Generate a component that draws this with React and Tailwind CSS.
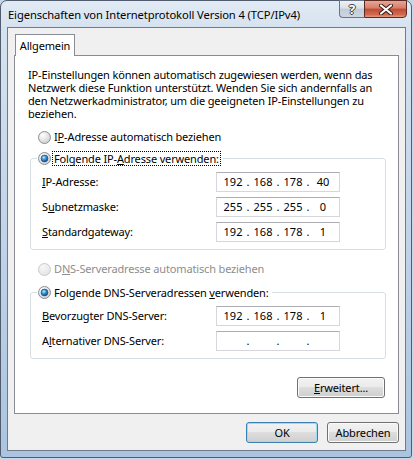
import React, { useId } from "react"

function Radio({ checked = false, disabled = false }) {
    const id = useId().replace(/:/g, "")
    return (
        <svg width="13" height="13" viewBox="0 0 13 13" className="shrink-0">
            <defs>
                <radialGradient id={`f${id}`} cx="0.35" cy="0.3" r="0.75">
                    <stop offset="0" stopColor={disabled ? "#f7f7f7" : "#ffffff"} />
                    <stop offset="1" stopColor={disabled ? "#e4e4e4" : "#cfcfcf"} />
                </radialGradient>
                <radialGradient id={`d${id}`} cx="0.4" cy="0.35" r="0.65">
                    <stop offset="0" stopColor="#c4ecff" />
                    <stop offset="0.45" stopColor="#3a9be0" />
                    <stop offset="1" stopColor="#0f4c84" />
                </radialGradient>
            </defs>
            <circle cx="6.5" cy="6.5" r="6" fill={`url(#f${id})`} stroke={disabled ? "#cacaca" : "#8c8e90"} />
            {checked && (
                <circle cx="6.5" cy="6.5" r="3.4" fill={`url(#d${id})`} stroke="#1d4f7d" strokeWidth="0.7" />
            )}
        </svg>
    )
}

function IpField({ parts }) {
    return (
        <div className="flex h-[20px] w-[124px] shrink-0 items-center border border-[#d5d7dc] border-t-[#abadb3] bg-white pl-[4px] leading-[18px] tracking-normal">
            {[0, 1, 2, 3].map((i) => (
                <React.Fragment key={i}>
                    <span className="w-[24px] text-center">{parts ? parts[i] : ""}</span>
                    {i < 3 && <span className="w-[6px] text-center">.</span>}
                </React.Fragment>
            ))}
        </div>
    )
}

function Row({ label, parts }) {
    return (
        <div className="flex items-center">
            <div className="w-[174px] leading-[14px]">{label}</div>
            <IpField parts={parts} />
        </div>
    )
}

function Btn({ children, primary = false, className = "" }) {
    return (
        <button
            className={`flex h-[21px] items-center justify-center rounded-[3px] border bg-[linear-gradient(180deg,#f2f2f2_0%,#ebebeb_46%,#dddddd_50%,#cfcfcf_100%)] leading-[14px] text-black ${
                primary
                    ? "border-[#3c7fb1] shadow-[inset_0_0_0_1px_#9fd9f6]"
                    : "border-[#707070] shadow-[inset_0_0_0_1px_#fbfbfb]"
            } ${className}`}
        >
            {children}
        </button>
    )
}

export default function App() {
    return (
        <div className="h-[459px] w-[414px] overflow-hidden whitespace-nowrap bg-[#c6d7ea] font-['Segoe_UI','Noto_Sans',sans-serif] text-[11px] tracking-[-0.15px] text-black">
            {/* Window frame */}
            <div className="flex h-[458px] w-[412px] flex-col rounded-t-[7px] rounded-b-[3px] border border-[#4f5d6e] bg-[linear-gradient(180deg,#e2ebf5_0%,#d6e2ef_6%,#c6d7ea_40%,#abc4df_100%)]">
                {/* Title bar */}
                <div className="flex h-[26px] items-start justify-between">
                    <div className="pl-[7px] pt-[6px] text-[11.2px] leading-[16px] tracking-[-0.1px]">
                        Eigenschaften von Internetprotokoll Version 4 (TCP/IPv4)
                    </div>
                    <div className="-mt-px flex pr-[4px]">
                        <div className="flex h-[18px] w-[25px] items-center justify-center rounded-bl-[4px] border border-r-0 border-[#6b7584] bg-[linear-gradient(180deg,#eef2f6_0%,#d9e0e8_45%,#c2ccd8_50%,#cdd6e0_100%)] text-[13px] font-bold leading-none text-white [text-shadow:0_1px_0_#3a4350,0_-1px_0_#3a4350,1px_0_0_#3a4350,-1px_0_0_#3a4350]">
                            ?
                        </div>
                        <div className="flex h-[18px] w-[43px] items-center justify-center rounded-br-[4px] border border-[#5b2a22] bg-[linear-gradient(180deg,#e6a697_0%,#d77c66_45%,#c04a33_50%,#d26a4f_85%,#e49a80_100%)]">
                            <svg width="14" height="11" viewBox="0 0 14 11">
                                <path d="M2 1.5 L12 9.5 M12 1.5 L2 9.5" stroke="#3a1712" strokeWidth="4" strokeLinecap="round" />
                                <path d="M2 1.5 L12 9.5 M12 1.5 L2 9.5" stroke="#ffffff" strokeWidth="2.2" strokeLinecap="round" />
                            </svg>
                        </div>
                    </div>
                </div>

                {/* Client area */}
                <div className="ml-[6px] mr-[5px] flex h-[424px] flex-col border border-[#6e7b8b] bg-[#f0f0f0] px-[6px] pt-[6px]">
                    {/* Tab */}
                    <div className="relative z-10 -mb-px ml-px flex h-[22px] w-[60px] items-center justify-center border border-b-0 border-[#898c95] bg-white leading-[14px]">
                        Allgemein
                    </div>

                    {/* Tab panel */}
                    <div className="flex h-[359px] flex-col border border-[#898c95] bg-white pb-[15px] pl-[13px] pr-[12px] pt-[12px]">
                        <p className="leading-[13px]">
                            IP-Einstellungen können automatisch zugewiesen werden, wenn das
                            <br />
                            Netzwerk diese Funktion unterstützt. Wenden Sie sich andernfalls an
                            <br />
                            den Netzwerkadministrator, um die geeigneten IP-Einstellungen zu
                            <br />
                            beziehen.
                        </p>

                        <div className="mt-[10px] flex h-[14px] items-center gap-[3px] pl-[10px]">
                            <Radio />
                            <span>
                                I<u>P</u>-Adresse automatisch beziehen
                            </span>
                        </div>

                        <fieldset className="ml-[2px] mt-[7px] rounded-[3px] border border-[#d5dfe5] pb-[7px] pl-[11px] pt-[7px]">
                            <legend className="-ml-[5px] flex h-[14px] items-center gap-[2px] pl-px pr-[3px]">
                                <Radio checked />
                                <span className="px-px leading-[13px] outline-1 outline-dotted outline-black">
                                    Folgende IP-<u>A</u>dresse verwenden:
                                </span>
                            </legend>
                            <div className="flex flex-col gap-[5px]">
                                <Row label={<><u>I</u>P-Adresse:</>} parts={["192", "168", "178", "40"]} />
                                <Row label={<>S<u>u</u>bnetzmaske:</>} parts={["255", "255", "255", "0"]} />
                                <Row label={<><u>S</u>tandardgateway:</>} parts={["192", "168", "178", "1"]} />
                            </div>
                        </fieldset>

                        <div className="mt-[12px] flex h-[14px] items-center gap-[3px] pl-[10px] text-[#8d8d8d]">
                            <Radio disabled />
                            <span>
                                D<u>N</u>S-Serveradresse automatisch beziehen
                            </span>
                        </div>

                        <fieldset className="ml-[2px] mt-[9px] rounded-[3px] border border-[#d5dfe5] pb-[7px] pl-[11px] pt-[7px]">
                            <legend className="-ml-[5px] flex h-[14px] items-center gap-[3px] pl-px pr-[3px]">
                                <Radio checked />
                                <span className="leading-[13px]">
                                    Folgende DNS-Serveradressen <u>v</u>erwenden:
                                </span>
                            </legend>
                            <div className="flex flex-col gap-[5px]">
                                <Row label={<><u>B</u>evorzugter DNS-Server:</>} parts={["192", "168", "178", "1"]} />
                                <Row label={<>A<u>l</u>ternativer DNS-Server:</>} />
                            </div>
                        </fieldset>

                        <div className="mt-auto flex justify-end pr-px">
                            <Btn className="w-[88px]">
                                <u>E</u>rweitert...
                            </Btn>
                        </div>
                    </div>

                    {/* Dialog buttons */}
                    <div className="mt-[8px] flex justify-end gap-[9px]">
                        <Btn primary className="w-[72px]">OK</Btn>
                        <Btn className="w-[72px]">Abbrechen</Btn>
                    </div>
                </div>
            </div>
        </div>
    )
}
